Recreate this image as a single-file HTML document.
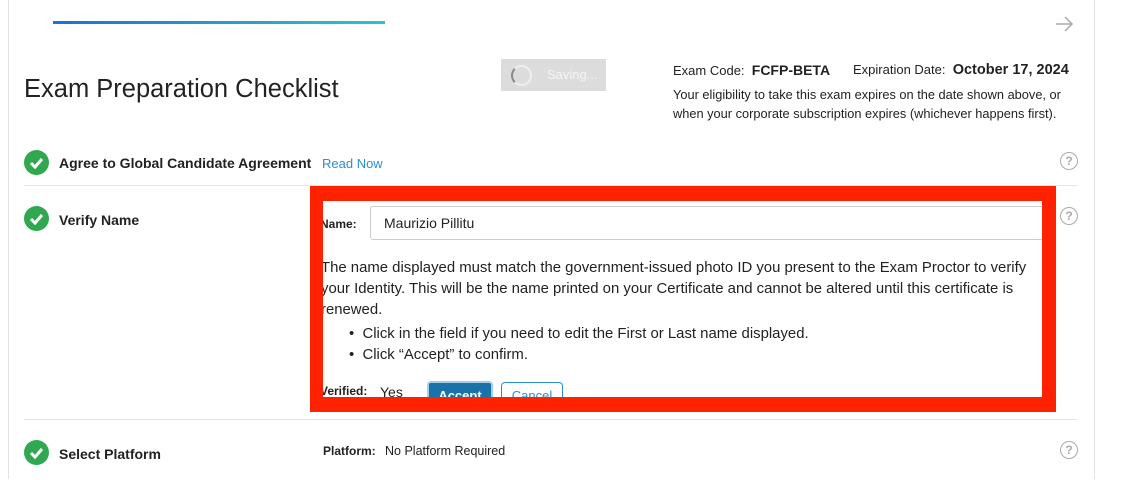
<!DOCTYPE html>
<html><head><style>
html,body{margin:0;width:1124px;height:480px;overflow:hidden}
body{background:#fff;font-family:"Liberation Sans",sans-serif;color:#222;position:relative}
.a{position:absolute}
.card{left:8px;top:-10px;width:1085px;height:488px;border:1px solid #e2e2e2;border-bottom:none;border-radius:10px 10px 0 0}
.chk{width:25px;height:25px;border-radius:50%;background:#2fa84f}
.chk svg{display:block}
.q{width:16px;height:16px;border:1.5px solid #aaa;border-radius:50%;color:#aaa;font-size:12px;text-align:center;line-height:16px;font-weight:bold}
.lbl{font-size:14px;font-weight:bold;color:#222}
.hr{height:1px;background:#e5e5e5}
</style></head><body>
<div class="a card"></div>
<div class="a" style="left:53px;top:21px;width:332px;height:3px;background:linear-gradient(90deg,#1e6fd9,#2bc6c4)"></div>
<svg class="a" style="left:1054px;top:15px" width="20" height="18"><path d="M2 9H18M11 2L18 9L11 16" stroke="#aaa" stroke-width="1.5" fill="none"/></svg>
<div class="a" style="left:24px;top:75px;font-size:25.5px;color:#222">Exam Preparation Checklist</div>
<div class="a" style="left:501px;top:59px;width:105px;height:32px;background:#dcdcdc"></div>
<div class="a" style="left:511px;top:65px;width:17px;height:17px;border:2px solid #eee;border-left-color:#888;border-radius:50%"></div>
<div class="a" style="left:547px;top:67px;font-size:13px;color:#f4f4f4">Saving...</div>
<div class="a" style="left:673px;top:62px;font-size:13px">Exam Code: &nbsp;<b style="font-size:14px">FCFP-BETA</b></div>
<div class="a" style="left:853px;top:62px;font-size:13px">Expiration Date: &nbsp;<b style="font-size:14.5px">October 17, 2024</b></div>
<div class="a" style="left:673px;top:85px;font-size:12.8px;line-height:19px;width:430px;white-space:nowrap">Your eligibility to take this exam expires on the date shown above, or<br>when your corporate subscription expires (whichever happens first).</div>

<div class="a chk" style="left:24px;top:150px"><svg width="25" height="25"><path d="M7 13L11 17L18 9" stroke="#fff" stroke-width="3" fill="none"/></svg></div>
<div class="a lbl" style="left:59px;top:155px">Agree to Global Candidate Agreement</div>
<div class="a" style="left:322px;top:156px;font-size:13px;color:#2a8fd1">Read Now</div>
<div class="a q" style="left:1060px;top:152px">?</div>
<div class="a hr" style="left:24px;top:185px;width:1054px"></div>

<div class="a chk" style="left:24px;top:206px"><svg width="25" height="25"><path d="M7 13L11 17L18 9" stroke="#fff" stroke-width="3" fill="none"/></svg></div>
<div class="a lbl" style="left:59px;top:212px">Verify Name</div>
<div class="a q" style="left:1060px;top:207px">?</div>

<div class="a" style="left:310px;top:186px;width:746px;height:226px;background:#ff2200"></div>
<div class="a" style="left:323px;top:201px;width:719px;height:196px;background:#fff;overflow:hidden">
 <div class="a" style="left:-3px;top:16px;font-size:12px;font-weight:bold">Name:</div>
 <div class="a" style="left:47px;top:5px;width:680px;height:32px;border:1px solid #ccc;border-radius:3px"></div>
 <div class="a" style="left:61px;top:14px;font-size:14px">Maurizio Pillitu</div>
 <div class="a" style="left:-2px;top:57px;width:730px;font-size:14.9px;line-height:21px;white-space:nowrap">The name displayed must match the government-issued photo ID you present to the Exam Proctor to verify<br>your Identity. This will be the name printed on your Certificate and cannot be altered until this certificate is<br>renewed.</div>
 <div class="a" style="left:26px;top:123px;font-size:14.9px;line-height:21px">•&nbsp; Click in the field if you need to edit the First or Last name displayed.<br>•&nbsp; Click “Accept” to confirm.</div>
 <div class="a" style="left:-3px;top:183px;font-size:12px;font-weight:bold">Verified:</div>
 <div class="a" style="left:57px;top:183px;font-size:14px">Yes</div>
 <div class="a" style="left:104px;top:180px;width:62px;height:26px;background:#1a73a8;border:2px solid #9fd0ee;border-radius:4px;color:#fff;font-size:13px;font-weight:bold;text-align:center;line-height:26px">Accept</div>
 <div class="a" style="left:178px;top:181px;width:60px;height:26px;border:1px solid #2a8fd1;border-radius:4px;color:#2a8fd1;font-size:13px;text-align:center;line-height:26px">Cancel</div>
</div>

<div class="a hr" style="left:24px;top:419px;width:1054px"></div>
<div class="a chk" style="left:24px;top:440px"><svg width="25" height="25"><path d="M7 13L11 17L18 9" stroke="#fff" stroke-width="3" fill="none"/></svg></div>
<div class="a lbl" style="left:59px;top:446px">Select Platform</div>
<div class="a" style="left:323px;top:444px;font-size:12px;font-weight:bold">Platform:</div>
<div class="a" style="left:385px;top:444px;font-size:12.5px">No Platform Required</div>
<div class="a q" style="left:1060px;top:441px">?</div>
</body></html>
